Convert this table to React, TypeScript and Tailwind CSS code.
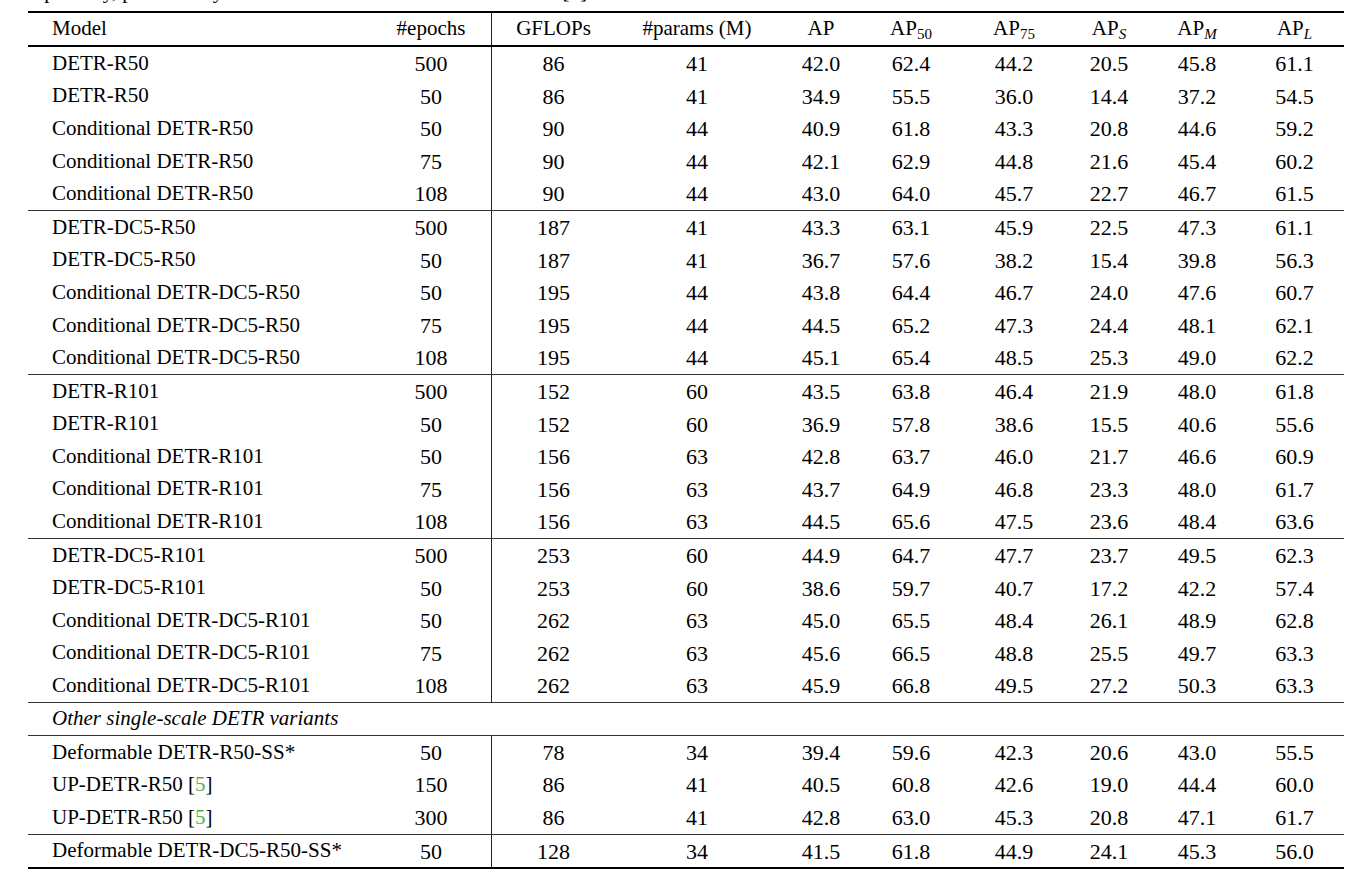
import React from "react";

type R = [string, string, string, string, string, string, string, string, string, string];

const g1: R[] = [
  ["DETR-R50", "500", "86", "41", "42.0", "62.4", "44.2", "20.5", "45.8", "61.1"],
  ["DETR-R50", "50", "86", "41", "34.9", "55.5", "36.0", "14.4", "37.2", "54.5"],
  ["Conditional DETR-R50", "50", "90", "44", "40.9", "61.8", "43.3", "20.8", "44.6", "59.2"],
  ["Conditional DETR-R50", "75", "90", "44", "42.1", "62.9", "44.8", "21.6", "45.4", "60.2"],
  ["Conditional DETR-R50", "108", "90", "44", "43.0", "64.0", "45.7", "22.7", "46.7", "61.5"],
];
const g2: R[] = [
  ["DETR-DC5-R50", "500", "187", "41", "43.3", "63.1", "45.9", "22.5", "47.3", "61.1"],
  ["DETR-DC5-R50", "50", "187", "41", "36.7", "57.6", "38.2", "15.4", "39.8", "56.3"],
  ["Conditional DETR-DC5-R50", "50", "195", "44", "43.8", "64.4", "46.7", "24.0", "47.6", "60.7"],
  ["Conditional DETR-DC5-R50", "75", "195", "44", "44.5", "65.2", "47.3", "24.4", "48.1", "62.1"],
  ["Conditional DETR-DC5-R50", "108", "195", "44", "45.1", "65.4", "48.5", "25.3", "49.0", "62.2"],
];
const g3: R[] = [
  ["DETR-R101", "500", "152", "60", "43.5", "63.8", "46.4", "21.9", "48.0", "61.8"],
  ["DETR-R101", "50", "152", "60", "36.9", "57.8", "38.6", "15.5", "40.6", "55.6"],
  ["Conditional DETR-R101", "50", "156", "63", "42.8", "63.7", "46.0", "21.7", "46.6", "60.9"],
  ["Conditional DETR-R101", "75", "156", "63", "43.7", "64.9", "46.8", "23.3", "48.0", "61.7"],
  ["Conditional DETR-R101", "108", "156", "63", "44.5", "65.6", "47.5", "23.6", "48.4", "63.6"],
];
const g4: R[] = [
  ["DETR-DC5-R101", "500", "253", "60", "44.9", "64.7", "47.7", "23.7", "49.5", "62.3"],
  ["DETR-DC5-R101", "50", "253", "60", "38.6", "59.7", "40.7", "17.2", "42.2", "57.4"],
  ["Conditional DETR-DC5-R101", "50", "262", "63", "45.0", "65.5", "48.4", "26.1", "48.9", "62.8"],
  ["Conditional DETR-DC5-R101", "75", "262", "63", "45.6", "66.5", "48.8", "25.5", "49.7", "63.3"],
  ["Conditional DETR-DC5-R101", "108", "262", "63", "45.9", "66.8", "49.5", "27.2", "50.3", "63.3"],
];
const g5: R[] = [
  ["Deformable DETR-R50-SS*", "50", "78", "34", "39.4", "59.6", "42.3", "20.6", "43.0", "55.5"],
  ["UP-DETR-R50 [5]", "150", "86", "41", "40.5", "60.8", "42.6", "19.0", "44.4", "60.0"],
  ["UP-DETR-R50 [5]", "300", "86", "41", "42.8", "63.0", "45.3", "20.8", "47.1", "61.7"],
];
const g6: R[] = [
  ["Deformable DETR-DC5-R50-SS*", "50", "128", "34", "41.5", "61.8", "44.9", "24.1", "45.3", "56.0"],
];

const COLS =
  "grid grid-cols-[343px_120px_124px_164px_84px_96px_110px_80px_96px_99px]";

function Name({ s }: { s: string }) {
  if (s.endsWith("[5]")) {
    const base = s.slice(0, -3);
    return (
      <span>
        {base}[<span className="text-[#4fb14f]">5</span>]
      </span>
    );
  }
  return <span>{s}</span>;
}

function Row({ r, h }: { r: R; h: string }) {
  return (
    <div className={`${COLS} ${h}`}>
      <div className="flex items-center pl-[24px] text-[21px] whitespace-nowrap">
        <Name s={r[0]} />
      </div>
      {r.slice(1).map((v, i) => (
        <div
          key={i}
          className={
            i === 1
              ? "flex items-center justify-center text-[22px] border-l border-[#222]"
              : "flex items-center justify-center text-[22px]"
          }
        >
          {v}
        </div>
      ))}
    </div>
  );
}

function Group({ rows, last }: { rows: R[]; last?: boolean }) {
  return (
    <div className="flex flex-col">
      {rows.map((r, i) => (
        <Row key={i} r={r} h={last ? "h-[32px]" : "h-[32.6px]"} />
      ))}
    </div>
  );
}

function Thin() {
  return <div className="h-px bg-[#333]" />;
}
function Thick() {
  return <div className="h-[2px] bg-black" />;
}

function AP({ sub, italic }: { sub: string; italic?: boolean }) {
  return (
    <span className="whitespace-nowrap">
      AP
      <span
        className={
          italic
            ? "relative top-[4px] text-[15px] italic"
            : "relative top-[4px] text-[15px]"
        }
      >
        {sub}
      </span>
    </span>
  );
}

export default function App() {
  return (
    <div className="w-[1361px] h-[872px] bg-white text-black overflow-hidden font-[family-name:'Liberation_Serif',serif]">
      <div className="h-[11px] overflow-hidden">
        <p className="ml-[28px] -mt-[21px] text-[21px] leading-[24px] whitespace-nowrap">
          repository, provided by the authors of the deformable DETR in [3].
        </p>
      </div>
      <div className="ml-[28px] w-[1316px] flex flex-col">
        <Thick />
        <div className={`${COLS} h-[32px]`}>
          <div className="flex items-center pl-[24px] text-[21px]">Model</div>
          <div className="flex items-center justify-center text-[21px]">#epochs</div>
          <div className="flex items-center justify-center text-[21px] border-l border-[#222]">GFLOPs</div>
          <div className="flex items-center justify-center text-[21px]">#params (M)</div>
          <div className="flex items-center justify-center text-[21px]">AP</div>
          <div className="flex items-center justify-center text-[21px]">
            <AP sub="50" />
          </div>
          <div className="flex items-center justify-center text-[21px]">
            <AP sub="75" />
          </div>
          <div className="flex items-center justify-center text-[21px]">
            <AP sub="S" italic />
          </div>
          <div className="flex items-center justify-center text-[21px]">
            <AP sub="M" italic />
          </div>
          <div className="flex items-center justify-center text-[21px]">
            <AP sub="L" italic />
          </div>
        </div>
        <Thick />
        <Group rows={g1} />
        <Thin />
        <Group rows={g2} />
        <Thin />
        <Group rows={g3} />
        <Thin />
        <Group rows={g4} />
        <Thin />
        <div className="h-[32px] flex items-center pl-[24px] text-[21px] italic">
          Other single-scale DETR variants
        </div>
        <Thin />
        <Group rows={g5} />
        <Thin />
        <Group rows={g6} last />
        <Thick />
      </div>
    </div>
  );
}
